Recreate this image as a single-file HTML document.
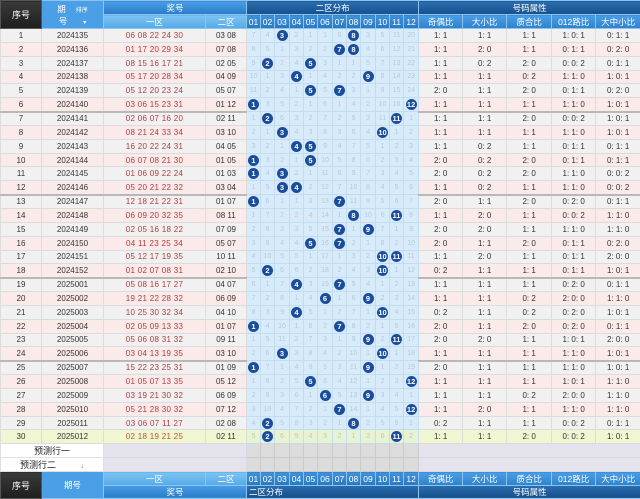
<!DOCTYPE html>
<html><head><meta charset="utf-8">
<style>
*{margin:0;padding:0;box-sizing:border-box}
body{width:640px;height:498px;overflow:hidden;background:#fff;font-family:"Liberation Sans","Noto Sans CJK SC",sans-serif}
table{border-collapse:collapse;table-layout:fixed;width:640px}
td,th{font-size:8px;text-align:center;white-space:nowrap;overflow:hidden;padding:0;font-weight:normal}
thead th,tfoot th{color:#fff;border:1px solid #8cc4ee;font-size:8.5px}
thead tr{height:14px}
tfoot tr{height:13.5px}
.dk{background:linear-gradient(#3a3a3a,#1e1e1e);border-color:#555!important;font-size:9px}
.qh{background:#4a9fe6}
.jh{background:linear-gradient(#4a9ee6,#2a7cc8)}
.sh{background:linear-gradient(#7cc3f2,#55aae8)}
.dh{background:linear-gradient(#2a6fb0,#174f8c)}
.nh{background:linear-gradient(#3f93da,#2a78c2)}
.ah{background:linear-gradient(#4a9ee6,#2f82cc)}
tbody.m tr{height:13.85px}
tbody.m td{border:1px solid #dcdcdc;color:#333}
tbody.m tr:nth-child(odd) td{background:#f1f1f1}
tbody.m tr:nth-child(even) td{background:#fbeaea}
tbody.m td:nth-child(3){color:#b43a3a;letter-spacing:0.3px}
tbody.m td:nth-child(n+5):nth-child(-n+16){background:#d8ebfa!important;color:#b4c9dc;border:1px solid #c4dcf0;font-size:7px}
tbody.m tr.g td{border-top:2px solid #b8b8b8}
tbody.m tr.last td{background:#eef7d2!important}
tbody.m tr.last td:nth-child(n+5):nth-child(-n+16){background:#e7f3d2!important;color:#bcd0a8}
tbody.m tr.last td:nth-child(3){color:#c8502a}
i{display:inline-block;width:11px;height:11px;border-radius:50%;background:#1b4d9e;color:#fff;font-style:normal;font-weight:bold;font-size:7.5px;line-height:11px;vertical-align:middle}
tbody.pb tr{height:13.5px}
tbody.pb td{border:1px solid #d8d8de;background:#e4e3ee;color:#222;font-size:9px}
tbody.pb td.w{background:#fff;border-color:#e0e0e0}
tbody.pb td.gd{background:#dcdcdc;border-color:#cacaca}
</style></head><body>
<table>
<colgroup><col style="width:41px"><col style="width:62px"><col style="width:102px"><col style="width:41px"><col style="width:14px"><col style="width:14px"><col style="width:15px"><col style="width:14px"><col style="width:14px"><col style="width:15px"><col style="width:14px"><col style="width:14px"><col style="width:15px"><col style="width:14px"><col style="width:14px"><col style="width:15px"><col style="width:44px"><col style="width:44px"><col style="width:45px"><col style="width:44px"><col style="width:45px"></colgroup>
<thead>
<tr><th rowspan="2" class="dk">序号</th><th rowspan="2" class="qh">期<span style="font-size:6px;margin-left:10px">排序</span><br>号<span style="font-size:6px;margin-left:16px">▾</span></th><th colspan="2" class="jh">奖号</th><th colspan="12" class="dh">二区分布</th><th colspan="5" class="dh">号码属性</th></tr>
<tr><th class="sh">一区</th><th class="sh">二区</th><th class="nh">01</th><th class="nh">02</th><th class="nh">03</th><th class="nh">04</th><th class="nh">05</th><th class="nh">06</th><th class="nh">07</th><th class="nh">08</th><th class="nh">09</th><th class="nh">10</th><th class="nh">11</th><th class="nh">12</th><th class="ah">奇偶比</th><th class="ah">大小比</th><th class="ah">质合比</th><th class="ah">012路比</th><th class="ah">大中小比</th></tr>
</thead>
<tbody class="m">
<tr><td>1</td><td>2024135</td><td>06 08 22 24 30</td><td>03 08</td><td>7</td><td>4</td><td><i>3</i></td><td>2</td><td>1</td><td>1</td><td>6</td><td><i>8</i></td><td>3</td><td>5</td><td>11</td><td>20</td><td>1: 1</td><td>1: 1</td><td>1: 1</td><td>1: 0: 1</td><td>0: 1: 1</td></tr>
<tr><td>2</td><td>2024136</td><td>01 17 20 29 34</td><td>07 08</td><td>8</td><td>5</td><td>1</td><td>3</td><td>2</td><td>2</td><td><i>7</i></td><td><i>8</i></td><td>4</td><td>6</td><td>12</td><td>21</td><td>1: 1</td><td>2: 0</td><td>1: 1</td><td>0: 1: 1</td><td>0: 2: 0</td></tr>
<tr><td>3</td><td>2024137</td><td>08 15 16 17 21</td><td>02 05</td><td>9</td><td><i>2</i></td><td>2</td><td>4</td><td><i>5</i></td><td>3</td><td>1</td><td>1</td><td>5</td><td>7</td><td>13</td><td>22</td><td>1: 1</td><td>0: 2</td><td>2: 0</td><td>0: 0: 2</td><td>0: 1: 1</td></tr>
<tr><td>4</td><td>2024138</td><td>05 17 20 28 34</td><td>04 09</td><td>10</td><td>1</td><td>3</td><td><i>4</i></td><td>1</td><td>4</td><td>2</td><td>2</td><td><i>9</i></td><td>8</td><td>14</td><td>23</td><td>1: 1</td><td>1: 1</td><td>0: 2</td><td>1: 1: 0</td><td>1: 0: 1</td></tr>
<tr><td>5</td><td>2024139</td><td>05 12 20 23 24</td><td>05 07</td><td>11</td><td>2</td><td>4</td><td>1</td><td><i>5</i></td><td>5</td><td><i>7</i></td><td>3</td><td>1</td><td>9</td><td>15</td><td>24</td><td>2: 0</td><td>1: 1</td><td>2: 0</td><td>0: 1: 1</td><td>0: 2: 0</td></tr>
<tr><td>6</td><td>2024140</td><td>03 06 15 23 31</td><td>01 12</td><td><i>1</i></td><td>3</td><td>5</td><td>2</td><td>1</td><td>6</td><td>1</td><td>4</td><td>2</td><td>10</td><td>16</td><td><i>12</i></td><td>1: 1</td><td>1: 1</td><td>1: 1</td><td>1: 1: 0</td><td>1: 0: 1</td></tr>
<tr class="g"><td>7</td><td>2024141</td><td>02 06 07 16 20</td><td>02 11</td><td>1</td><td><i>2</i></td><td>6</td><td>3</td><td>2</td><td>7</td><td>2</td><td>5</td><td>3</td><td>11</td><td><i>11</i></td><td>1</td><td>1: 1</td><td>1: 1</td><td>2: 0</td><td>0: 0: 2</td><td>1: 0: 1</td></tr>
<tr><td>8</td><td>2024142</td><td>08 21 24 33 34</td><td>03 10</td><td>2</td><td>1</td><td><i>3</i></td><td>4</td><td>3</td><td>8</td><td>3</td><td>6</td><td>4</td><td><i>10</i></td><td>1</td><td>2</td><td>1: 1</td><td>1: 1</td><td>1: 1</td><td>1: 1: 0</td><td>1: 0: 1</td></tr>
<tr><td>9</td><td>2024143</td><td>16 20 22 24 31</td><td>04 05</td><td>3</td><td>2</td><td>1</td><td><i>4</i></td><td><i>5</i></td><td>9</td><td>4</td><td>7</td><td>5</td><td>1</td><td>2</td><td>3</td><td>1: 1</td><td>0: 2</td><td>1: 1</td><td>0: 1: 1</td><td>0: 1: 1</td></tr>
<tr><td>10</td><td>2024144</td><td>06 07 08 21 30</td><td>01 05</td><td><i>1</i></td><td>3</td><td>2</td><td>1</td><td><i>5</i></td><td>10</td><td>5</td><td>8</td><td>6</td><td>2</td><td>3</td><td>4</td><td>2: 0</td><td>0: 2</td><td>2: 0</td><td>0: 1: 1</td><td>0: 1: 1</td></tr>
<tr><td>11</td><td>2024145</td><td>01 06 09 22 24</td><td>01 03</td><td><i>1</i></td><td>4</td><td><i>3</i></td><td>2</td><td>1</td><td>11</td><td>6</td><td>9</td><td>7</td><td>3</td><td>4</td><td>5</td><td>2: 0</td><td>0: 2</td><td>2: 0</td><td>1: 1: 0</td><td>0: 0: 2</td></tr>
<tr><td>12</td><td>2024146</td><td>05 20 21 22 32</td><td>03 04</td><td>1</td><td>5</td><td><i>3</i></td><td><i>4</i></td><td>2</td><td>12</td><td>7</td><td>10</td><td>8</td><td>4</td><td>5</td><td>6</td><td>1: 1</td><td>0: 2</td><td>1: 1</td><td>1: 1: 0</td><td>0: 0: 2</td></tr>
<tr class="g"><td>13</td><td>2024147</td><td>12 18 21 22 31</td><td>01 07</td><td><i>1</i></td><td>6</td><td>1</td><td>1</td><td>3</td><td>13</td><td><i>7</i></td><td>11</td><td>9</td><td>5</td><td>6</td><td>7</td><td>2: 0</td><td>1: 1</td><td>2: 0</td><td>0: 2: 0</td><td>0: 1: 1</td></tr>
<tr><td>14</td><td>2024148</td><td>06 09 20 32 35</td><td>08 11</td><td>1</td><td>7</td><td>2</td><td>2</td><td>4</td><td>14</td><td>1</td><td><i>8</i></td><td>10</td><td>6</td><td><i>11</i></td><td>8</td><td>1: 1</td><td>2: 0</td><td>1: 1</td><td>0: 0: 2</td><td>1: 1: 0</td></tr>
<tr><td>15</td><td>2024149</td><td>02 05 16 18 22</td><td>07 09</td><td>2</td><td>8</td><td>3</td><td>3</td><td>5</td><td>15</td><td><i>7</i></td><td>1</td><td><i>9</i></td><td>7</td><td>1</td><td>9</td><td>2: 0</td><td>2: 0</td><td>1: 1</td><td>1: 1: 0</td><td>1: 1: 0</td></tr>
<tr><td>16</td><td>2024150</td><td>04 11 23 25 34</td><td>05 07</td><td>3</td><td>9</td><td>4</td><td>4</td><td><i>5</i></td><td>16</td><td><i>7</i></td><td>2</td><td>1</td><td>8</td><td>2</td><td>10</td><td>2: 0</td><td>1: 1</td><td>2: 0</td><td>0: 1: 1</td><td>0: 2: 0</td></tr>
<tr><td>17</td><td>2024151</td><td>05 12 17 19 35</td><td>10 11</td><td>4</td><td>10</td><td>5</td><td>5</td><td>1</td><td>17</td><td>1</td><td>3</td><td>2</td><td><i>10</i></td><td><i>11</i></td><td>11</td><td>1: 1</td><td>2: 0</td><td>1: 1</td><td>0: 1: 1</td><td>2: 0: 0</td></tr>
<tr><td>18</td><td>2024152</td><td>01 02 07 08 31</td><td>02 10</td><td>5</td><td><i>2</i></td><td>6</td><td>6</td><td>2</td><td>18</td><td>2</td><td>4</td><td>3</td><td><i>10</i></td><td>1</td><td>12</td><td>0: 2</td><td>1: 1</td><td>1: 1</td><td>0: 1: 1</td><td>1: 0: 1</td></tr>
<tr class="g"><td>19</td><td>2025001</td><td>05 08 16 17 27</td><td>04 07</td><td>6</td><td>1</td><td>7</td><td><i>4</i></td><td>3</td><td>19</td><td><i>7</i></td><td>5</td><td>4</td><td>1</td><td>2</td><td>13</td><td>1: 1</td><td>1: 1</td><td>1: 1</td><td>0: 2: 0</td><td>0: 1: 1</td></tr>
<tr><td>20</td><td>2025002</td><td>19 21 22 28 32</td><td>06 09</td><td>7</td><td>2</td><td>8</td><td>1</td><td>4</td><td><i>6</i></td><td>1</td><td>6</td><td><i>9</i></td><td>2</td><td>3</td><td>14</td><td>1: 1</td><td>1: 1</td><td>0: 2</td><td>2: 0: 0</td><td>1: 1: 0</td></tr>
<tr><td>21</td><td>2025003</td><td>10 25 30 32 34</td><td>04 10</td><td>8</td><td>3</td><td>9</td><td><i>4</i></td><td>5</td><td>1</td><td>2</td><td>7</td><td>1</td><td><i>10</i></td><td>4</td><td>15</td><td>0: 2</td><td>1: 1</td><td>0: 2</td><td>0: 2: 0</td><td>1: 0: 1</td></tr>
<tr><td>22</td><td>2025004</td><td>02 05 09 13 33</td><td>01 07</td><td><i>1</i></td><td>4</td><td>10</td><td>1</td><td>6</td><td>2</td><td><i>7</i></td><td>8</td><td>2</td><td>1</td><td>5</td><td>16</td><td>2: 0</td><td>1: 1</td><td>2: 0</td><td>0: 2: 0</td><td>0: 1: 1</td></tr>
<tr><td>23</td><td>2025005</td><td>05 06 08 31 32</td><td>09 11</td><td>1</td><td>5</td><td>11</td><td>2</td><td>7</td><td>3</td><td>1</td><td>9</td><td><i>9</i></td><td>2</td><td><i>11</i></td><td>17</td><td>2: 0</td><td>2: 0</td><td>1: 1</td><td>1: 0: 1</td><td>2: 0: 0</td></tr>
<tr><td>24</td><td>2025006</td><td>03 04 13 19 35</td><td>03 10</td><td>2</td><td>6</td><td><i>3</i></td><td>3</td><td>8</td><td>4</td><td>2</td><td>10</td><td>1</td><td><i>10</i></td><td>1</td><td>18</td><td>1: 1</td><td>1: 1</td><td>1: 1</td><td>1: 1: 0</td><td>1: 0: 1</td></tr>
<tr class="g"><td>25</td><td>2025007</td><td>15 22 23 25 31</td><td>01 09</td><td><i>1</i></td><td>7</td><td>1</td><td>4</td><td>9</td><td>5</td><td>3</td><td>11</td><td><i>9</i></td><td>1</td><td>2</td><td>19</td><td>2: 0</td><td>1: 1</td><td>1: 1</td><td>1: 1: 0</td><td>1: 0: 1</td></tr>
<tr><td>26</td><td>2025008</td><td>01 05 07 13 35</td><td>05 12</td><td>1</td><td>8</td><td>2</td><td>5</td><td><i>5</i></td><td>6</td><td>4</td><td>12</td><td>1</td><td>2</td><td>3</td><td><i>12</i></td><td>1: 1</td><td>1: 1</td><td>1: 1</td><td>1: 0: 1</td><td>1: 1: 0</td></tr>
<tr><td>27</td><td>2025009</td><td>03 19 21 30 32</td><td>06 09</td><td>2</td><td>9</td><td>3</td><td>6</td><td>1</td><td><i>6</i></td><td>5</td><td>13</td><td><i>9</i></td><td>3</td><td>4</td><td>1</td><td>1: 1</td><td>1: 1</td><td>0: 2</td><td>2: 0: 0</td><td>1: 1: 0</td></tr>
<tr><td>28</td><td>2025010</td><td>05 21 28 30 32</td><td>07 12</td><td>3</td><td>10</td><td>4</td><td>7</td><td>2</td><td>1</td><td><i>7</i></td><td>14</td><td>1</td><td>4</td><td>5</td><td><i>12</i></td><td>1: 1</td><td>2: 0</td><td>1: 1</td><td>1: 1: 0</td><td>1: 1: 0</td></tr>
<tr><td>29</td><td>2025011</td><td>03 06 07 11 27</td><td>02 08</td><td>4</td><td><i>2</i></td><td>5</td><td>8</td><td>3</td><td>2</td><td>1</td><td><i>8</i></td><td>2</td><td>5</td><td>6</td><td>1</td><td>0: 2</td><td>1: 1</td><td>1: 1</td><td>0: 0: 2</td><td>0: 1: 1</td></tr>
<tr class="last"><td>30</td><td>2025012</td><td>02 18 19 21 25</td><td>02 11</td><td>5</td><td><i>2</i></td><td>6</td><td>9</td><td>4</td><td>3</td><td>2</td><td>1</td><td>3</td><td>6</td><td><i>11</i></td><td>2</td><td>1: 1</td><td>1: 1</td><td>2: 0</td><td>0: 0: 2</td><td>1: 0: 1</td></tr>
</tbody>
<tbody class="pb">
<tr><td colspan="2" class="w">预测行一</td><td colspan="2"></td><td class="gd"></td><td class="gd"></td><td class="gd"></td><td class="gd"></td><td class="gd"></td><td class="gd"></td><td class="gd"></td><td class="gd"></td><td class="gd"></td><td class="gd"></td><td class="gd"></td><td class="gd"></td><td colspan="5"></td></tr>
<tr><td colspan="2" class="w">预测行二<span style="color:#e07020;font-size:8px;margin-left:24px">↓</span></td><td colspan="2"></td><td class="gd"></td><td class="gd"></td><td class="gd"></td><td class="gd"></td><td class="gd"></td><td class="gd"></td><td class="gd"></td><td class="gd"></td><td class="gd"></td><td class="gd"></td><td class="gd"></td><td class="gd"></td><td colspan="5"></td></tr>
</tbody>
<tfoot>
<tr><th rowspan="2" class="dk">序号</th><th rowspan="2" class="qh">期号</th><th class="sh">一区</th><th class="sh">二区</th><th class="nh">01</th><th class="nh">02</th><th class="nh">03</th><th class="nh">04</th><th class="nh">05</th><th class="nh">06</th><th class="nh">07</th><th class="nh">08</th><th class="nh">09</th><th class="nh">10</th><th class="nh">11</th><th class="nh">12</th><th class="ah">奇偶比</th><th class="ah">大小比</th><th class="ah">质合比</th><th class="ah">012路比</th><th class="ah">大中小比</th></tr>
<tr><th colspan="2" class="jh">奖号</th><th colspan="12" class="dh" style="text-align:left;padding-left:2px">二区分布</th><th colspan="5" class="dh">号码属性</th></tr>
</tfoot>
</table>
</body></html>
